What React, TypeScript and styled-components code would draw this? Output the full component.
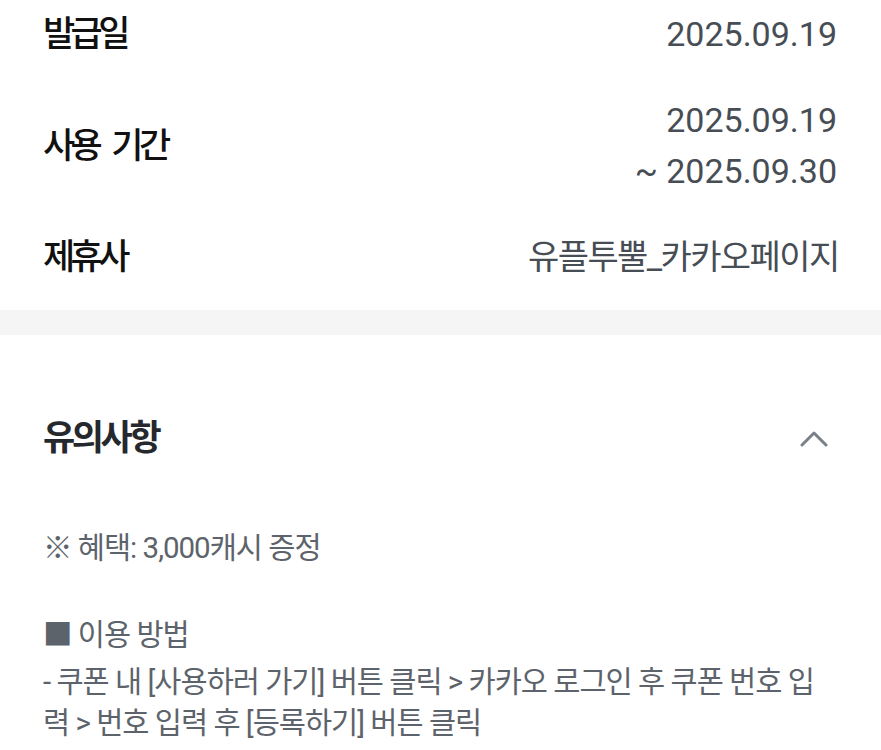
import styled, { createGlobalStyle } from "styled-components";

const GlobalStyle = createGlobalStyle`
  html, body {
    margin: 0;
    padding: 0;
    background: #ffffff;
  }
  body {
    font-family: Roboto, "Noto Sans CJK KR", sans-serif;
    -webkit-font-smoothing: antialiased;
  }
`;

// info list
const InfoList = styled.dl`
  margin: 0;
  padding: 9px 44px 27px 43px;
  display: flex;
  flex-direction: column;
  gap: 35px;
`;

const InfoRow = styled.div`
  display: flex;
  align-items: center;
  justify-content: space-between;
`;

const Label = styled.dt`
  margin: 0;
  font-size: 35px;
  line-height: 51px;
  font-weight: 500;
  color: #111111;
  letter-spacing: -4.6px;
  word-spacing: 9px;
`;

const Value = styled.dd<{ $ko?: boolean }>`
  margin: 0;
  display: flex;
  flex-direction: column;
  align-items: flex-end;
  font-size: 34px;
  line-height: 51px;
  font-weight: 400;
  color: #474d55;
  letter-spacing: ${(p) => (p.$ko ? "-1.6px" : "0")};
  margin-right: ${(p) => (p.$ko ? "-1.6px" : "0")};
`;

const Divider = styled.div`
  height: 25px;
  background: #f5f5f5;
`;

// notice
const Notice = styled.section`
  padding: 78px 44px 0 43px;
`;

const NoticeHeader = styled.div`
  display: flex;
  align-items: center;
  justify-content: space-between;
  margin-bottom: 64px;
`;

const NoticeTitle = styled.h2`
  margin: 0;
  font-size: 35px;
  line-height: 51px;
  font-weight: 700;
  color: #25292e;
  letter-spacing: -3.4px;
`;

const ToggleButton = styled.button`
  border: none;
  background: none;
  padding: 0;
  margin-right: 9px;
  width: 28px;
  height: 28px;
  display: flex;
  align-items: center;
  justify-content: center;
  cursor: pointer;
`;

const NoticeText = styled.p<{ $gap?: number }>`
  margin: 0 0 ${(p) => p.$gap ?? 0}px;
  font-size: 29.5px;
  line-height: 41px;
  font-weight: 400;
  color: #5d636b;
  letter-spacing: -1px;
`;

function ChevronUp() {
  return (
    <svg width="28" height="28" viewBox="0 0 28 28" fill="none">
      <polyline
        points="2,20 14,8 26,20"
        stroke="#7a8088"
        strokeWidth="3"
        strokeLinecap="round"
        strokeLinejoin="round"
      />
    </svg>
  );
}

function App() {
  return (
    <>
      <GlobalStyle />
      <InfoList>
        <InfoRow>
          <Label>발급일</Label>
          <Value>2025.09.19</Value>
        </InfoRow>
        <InfoRow>
          <Label>사용 기간</Label>
          <Value>
            <span>2025.09.19</span>
            <span>~ 2025.09.30</span>
          </Value>
        </InfoRow>
        <InfoRow>
          <Label>제휴사</Label>
          <Value $ko>유플투뿔_카카오페이지</Value>
        </InfoRow>
      </InfoList>
      <Divider />
      <Notice>
        <NoticeHeader>
          <NoticeTitle>유의사항</NoticeTitle>
          <ToggleButton aria-label="접기">
            <ChevronUp />
          </ToggleButton>
        </NoticeHeader>
        <NoticeText $gap={46}>※ 혜택: 3,000캐시 증정</NoticeText>
        <NoticeText $gap={6}>■ 이용 방법</NoticeText>
        <NoticeText>
          - 쿠폰 내 [사용하러 가기] 버튼 클릭 &gt; 카카오 로그인 후 쿠폰 번호 입력 &gt; 번호 입력 후 [등록하기] 버튼 클릭
        </NoticeText>
      </Notice>
    </>
  );
}

export default App;
